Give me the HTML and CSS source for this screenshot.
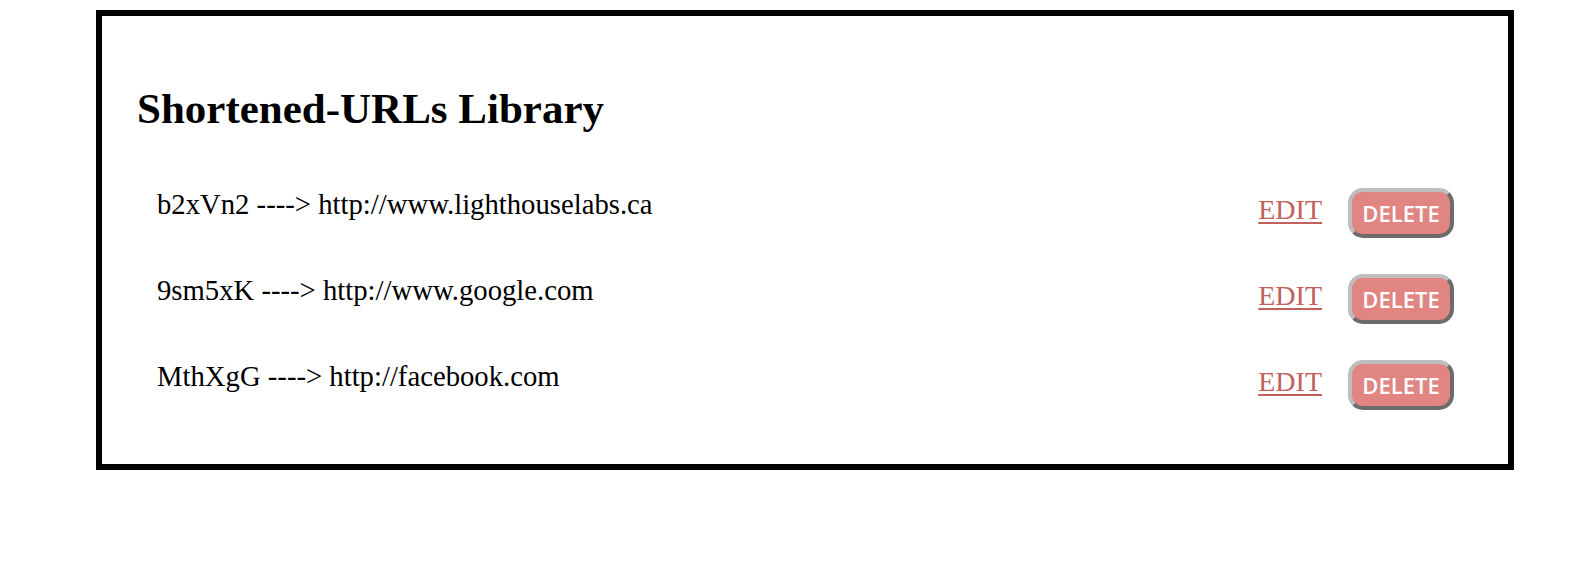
FILE: index.html
```html
<!DOCTYPE html>
<html>
<head>
<meta charset="utf-8">
<title>Shortened-URLs Library</title>
<link rel="stylesheet" href="styles.css">
</head>
<body>
<div class="frame">
  <h1 class="title">Shortened-URLs Library</h1>
  <ul class="list">
    <li class="row">
      <span class="entry">b2xVn2 ----&gt; http://www.lighthouselabs.ca</span>
      <div class="actions">
        <a class="edit" href="#">EDIT</a>
        <button class="delete" type="button">DELETE</button>
      </div>
    </li>
    <li class="row">
      <span class="entry">9sm5xK ----&gt; http://www.google.com</span>
      <div class="actions">
        <a class="edit" href="#">EDIT</a>
        <button class="delete" type="button">DELETE</button>
      </div>
    </li>
    <li class="row">
      <span class="entry">MthXgG ----&gt; http://facebook.com</span>
      <div class="actions">
        <a class="edit" href="#">EDIT</a>
        <button class="delete" type="button">DELETE</button>
      </div>
    </li>
  </ul>
</div>
</body>
</html>
```

FILE: styles.css
```css
html, body {
  margin: 0;
  padding: 0;
  background: #fff;
}

body {
  font-family: "Liberation Serif", "Times New Roman", serif;
  color: #000;
}

.frame {
  margin: 10px 82px 0 96px;
  border: 6px solid #000;
  padding: 68px 54px 54px 35px;
}

.title {
  margin: 0;
  font-size: 43px;
  font-weight: bold;
  line-height: 50px;
}

.list {
  list-style: none;
  margin: 54px 0 0 0;
  padding: 0 0 0 20px;
  display: flex;
  flex-direction: column;
  gap: 36px;
}

.row {
  display: flex;
  align-items: flex-start;
  justify-content: space-between;
  height: 50px;
}

.entry {
  font-size: 28.7px;
  line-height: 32px;
}

.actions {
  display: flex;
  align-items: flex-start;
  gap: 26px;
  height: 50px;
}

.edit {
  font-family: "Liberation Serif", "Times New Roman", serif;
  font-size: 28px;
  line-height: 44px;
  color: #c2615c;
  text-decoration: underline;
  text-underline-offset: 3px;
  text-decoration-thickness: 2px;
}

.delete {
  box-sizing: border-box;
  width: 106px;
  height: 50px;
  padding: 0;
  border-width: 4px;
  border-style: solid;
  border-color: #bdbdbd #6c6c6c #6c6c6c #bdbdbd;
  border-radius: 15px;
  background: #e08582;
  color: #fff;
  font-family: "Open Sans", "Liberation Sans", sans-serif;
  font-weight: 600;
  font-size: 22px;
  cursor: pointer;
}
```
